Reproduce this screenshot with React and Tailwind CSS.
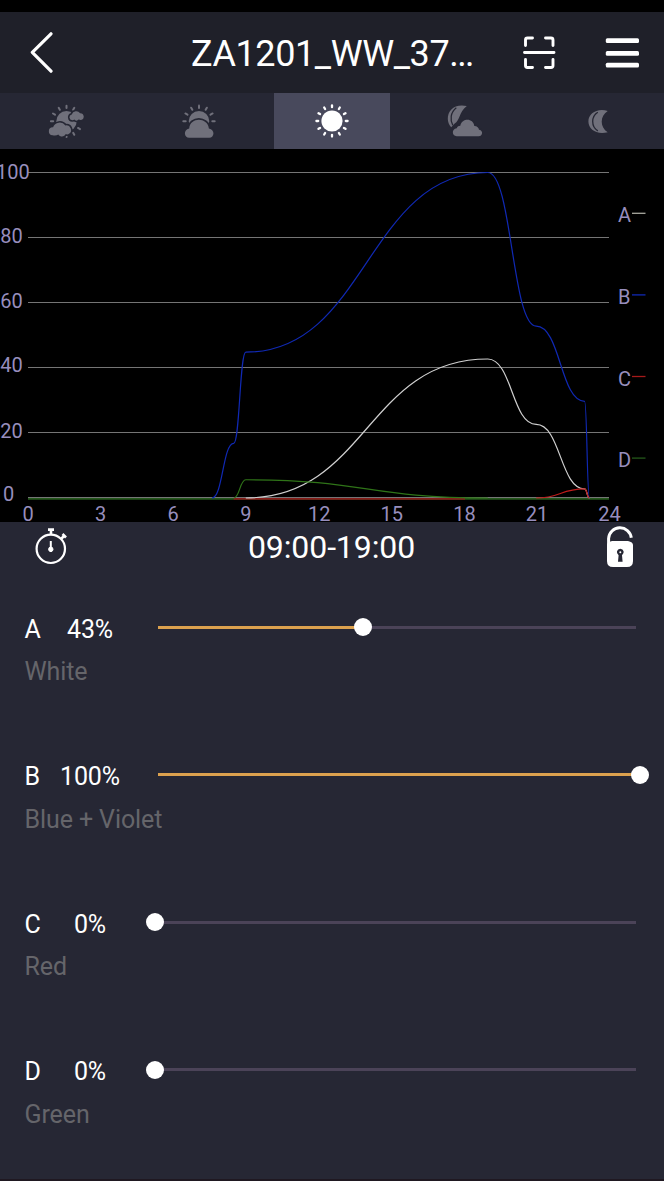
import React, { useState } from 'react';

const CHANNELS = [
  { id: 'A', name: 'White', value: 43, color: '#d0d0d0', legend: '#a9a9a0' },
  { id: 'B', name: 'Blue + Violet', value: 100, color: '#1029b4', legend: '#1029b4' },
  { id: 'C', name: 'Red', value: 0, color: '#c01c1c', legend: '#a51a1a' },
  { id: 'D', name: 'Green', value: 0, color: '#2f7418', legend: '#24581a' },
];

// [hour, percent] keyframes of the day
const CURVES = {
  A: [[9, 0], [19, 42.7], [21, 22.6], [23, 2.8], [23.2, 0]],
  B: [[7.6, 0], [8.5, 16.8], [9, 44.8], [19, 100], [21, 52.8], [23, 29.7], [23.2, 0]],
  C: [[21, 0], [23, 2.8], [23.2, 0]],
  D: [[8.5, 0], [9, 5.6], [19, 0]],
};

const toX = hour => 28 + hour * 24.2;
const toY = percent => 349 - percent * 3.255;

function curvePath(points) {
  return points.map(([h, p], i) => {
    const x = toX(h);
    const y = toY(p);
    if (i === 0) return `M${x} ${y}`;
    const [ph, pp] = points[i - 1];
    const mid = (toX(ph) + x) / 2;
    return `C${mid} ${toY(pp)} ${mid} ${y} ${x} ${y}`;
  }).join(' ');
}

function Rays({ cx, cy, inner, outer, angles, width = 2 }) {
  return angles.map(a => {
    const r = (a * Math.PI) / 180;
    return (
      <line
        key={a}
        x1={cx + Math.cos(r) * inner}
        y1={cy - Math.sin(r) * inner}
        x2={cx + Math.cos(r) * outer}
        y2={cy - Math.sin(r) * outer}
        stroke="currentColor"
        strokeWidth={width}
        strokeLinecap="round"
      />
    );
  });
}

function DawnIcon() {
  return (
    <svg width="36" height="36" viewBox="0 0 36 36" className="text-[#70707b]" fill="currentColor">
      <Rays cx={18.5} cy={18.3} inner={13.3} outer={15.6} angles={[60, 90, 120, 150, 180, 270, 300, 330]} />
      <circle cx="18.5" cy="18.3" r="10.2" />
      <g stroke="#262734" strokeWidth="3" paintOrder="stroke">
        <path d="M24.3 17.3a3 3 0 0 1-.6-5.9 4.8 4.8 0 0 1 8.4-1.1 3.4 3.4 0 0 1 1 6.7c-1 .2-1.7-.1-2.3-.7-1.7 2-3.5 1.6-4.3.2-.6.6-1.4.8-2.2.8z" />
        <path d="M4.6 32.3a4 4 0 0 1 .5-8 7 7 0 0 1 12.3-1.8 4.6 4.6 0 0 1 3.6 8.3c-.9.8-2.3.9-3.3.3-1 2.7-5 3.7-7.4.5-1.4 1-3.5 1.3-5.7.7z" />
      </g>
    </svg>
  );
}

function MorningIcon() {
  return (
    <svg width="36" height="36" viewBox="0 0 36 36" className="text-[#70707b]" fill="currentColor">
      <Rays cx={18} cy={18.3} inner={13.3} outer={15.7} angles={[0, 30, 60, 90, 120, 150, 180]} />
      <path d="M7.7 18.3a10.3 10.3 0 0 1 20.6 0l-1 3H8.7z" />
      <path
        d="M8.2 34.7c-5.2 0-6.2-8.2 0-9.3 1-11.5 18.2-11.5 19.7 0 6.4 1 5.7 9.3.3 9.3z"
        stroke="#262734"
        strokeWidth="3.4"
        paintOrder="stroke"
      />
    </svg>
  );
}

function DayIcon() {
  return (
    <svg width="36" height="36" viewBox="0 0 36 36" className="text-white" fill="currentColor">
      <Rays cx={18} cy={18} inner={13.8} outer={15.6} angles={[0, 30, 60, 90, 120, 150, 180, 210, 240, 270, 300, 330]} width={2.3} />
      <circle cx="18" cy="18" r="10.6" />
    </svg>
  );
}

function EveningIcon() {
  return (
    <svg width="36" height="36" viewBox="0 0 36 36" className="-translate-x-px text-[#70707b]" fill="currentColor">
      <path d="M20.8 3C9 .3 1.5 7.3 1.8 16c.1 3.3 1.3 6 3.4 8.2l3.2-3.5C14.5 17 12.5 9.5 20.8 3z" />
      <path d="M10.3 4.7C4.2 9.5 4 17 6.8 22.2" fill="none" stroke="#262734" strokeWidth="1.3" />
      <path
        d="M10.7 33.2c-4.9 0-5.4-7.3 0-8 .8-1.8 2-2.5 3.6-2.5 1.7-8 13-8 14 .3 3 .2 4.3 1.6 4.7 3.7 4.4.6 3.8 6.5-.3 6.5z"
        stroke="#262734"
        strokeWidth="3"
        paintOrder="stroke"
      />
    </svg>
  );
}

function NightIcon() {
  return (
    <svg width="36" height="36" viewBox="0 0 36 36" className="text-[#70707b]" fill="currentColor">
      <path d="M27.7 7.9C17 4.8 8.4 10.5 8.4 18.5S17 32.1 27.7 29.2c-8-5-8-16.300 0-21.300z" />
      <path d="M17.8 9.3c-6.8 4.2-6.8 14.4 0 18.6" fill="none" stroke="#262734" strokeWidth="1.3" />
    </svg>
  );
}

const PHASES = [
  { id: 'dawn', Icon: DawnIcon },
  { id: 'morning', Icon: MorningIcon },
  { id: 'day', Icon: DayIcon },
  { id: 'evening', Icon: EveningIcon },
  { id: 'night', Icon: NightIcon },
];

function Header() {
  return (
    <header className="flex h-[81px] items-center bg-[#1f2029] text-white">
      <button className="ml-[29px] h-11 w-6" aria-label="Back">
        <svg width="24" height="44" viewBox="0 0 24 44" fill="none" stroke="currentColor" strokeWidth="3.2" strokeLinecap="round" strokeLinejoin="round">
          <path d="M22 2.8 3.3 21.3 22 40.2" />
        </svg>
      </button>
      <h1 className="ml-[138px] w-[332px] pt-[3px] text-[36px] leading-none tracking-[-0.4px] whitespace-nowrap">
        ZA1201_WW_37<span className="tracking-[-1.6px]">...</span>
      </h1>
      <button className="h-[34px] w-[34px] shrink-0" aria-label="Scan">
        <svg width="34" height="34" viewBox="0 0 34 34" fill="none" stroke="currentColor" strokeWidth="2.9" strokeLinecap="round">
          <path d="M2.5 9.5V4q0-2 2-2h5M22.5 2H28q2 0 2 2v5.5M30 23.5v6q0 2-2 2h-5.5M9.5 31.500h-5q-2 0-2-2v-6M1.500 16.500H31" />
        </svg>
      </button>
      <button className="ml-12 h-[34px] w-[34px] shrink-0" aria-label="Menu">
        <svg width="34" height="34" viewBox="0 0 34 34" fill="currentColor">
          <rect x="0.8" y="2.2" width="33.2" height="4.7" rx="1.5" />
          <rect x="0.8" y="15" width="33.2" height="4.7" rx="1.5" />
          <rect x="0.8" y="26.8" width="33.2" height="4.7" rx="1.5" />
        </svg>
      </button>
    </header>
  );
}

function PhaseTabs({ active, onChange }) {
  return (
    <nav className="flex h-[56px] bg-[#262734]">
      {PHASES.map(({ id, Icon }) => (
        <button key={id} onClick={() => onChange(id)} className="flex flex-1 justify-center" aria-label={id}>
          <span className={`flex h-full w-[116px] items-center justify-center ${active === id ? 'bg-[#48495c]' : ''}`}>
            <Icon />
          </span>
        </button>
      ))}
    </nav>
  );
}

function ScheduleChart() {
  return (
    <div className="h-[373px] bg-black">
      <svg width="664" height="373" viewBox="0 0 664 373" className="block overflow-visible">
        {[100, 80, 60, 40, 20, 0].map((v, i) => (
          <g key={v}>
            <line x1="28" x2="609" y1={23.5 + i * 65} y2={23.5 + i * 65} stroke="#757575" strokeWidth="1" />
            <text
              x={v === 100 ? 12.8 : v === 0 ? 8.5 : 11.5}
              y={[30.3, 94.3, 158.8, 223.3, 288.5, 352][i]}
              textAnchor="middle"
              fontSize="20"
              fill="#978ebd"
            >
              {v}
            </text>
          </g>
        ))}
        <line x1="28" x2="609" y1="349.8" y2="349.8" stroke="#24571c" strokeWidth="1.8" />
        <line x1={toX(8.5)} x2="465" y1="349.8" y2="349.8" stroke="#861b19" strokeWidth="1.8" />
        {CHANNELS.map(c => (
          <path key={c.id} d={curvePath(CURVES[c.id])} fill="none" stroke={c.color} strokeWidth="1.2" />
        ))}
        {[0, 3, 6, 9, 12, 15, 18, 21, 24].map(h => (
          <text key={h} x={toX(h) + (h > 9 ? 0.8 : 0)} y="372" textAnchor="middle" fontSize="20" fill="#978ebd">{h}</text>
        ))}
        {CHANNELS.map((c, i) => (
          <g key={c.id}>
            <text x="618" y={73.3 + i * 81.6} fontSize="20" fill="#978ebd">{c.id}</text>
            <line x1="632" x2="645.5" y1={64.3 + i * 81.6} y2={64.3 + i * 81.6} stroke={c.legend} strokeWidth="1.3" />
          </g>
        ))}
      </svg>
    </div>
  );
}

function TimeRow() {
  return (
    <div className="flex h-[58px] items-start text-white">
      <svg width="36" height="40" viewBox="0 0 36 40" className="ml-[33px] mt-[5px]" fill="none" stroke="currentColor">
        <circle cx="17.8" cy="21.8" r="14.2" strokeWidth="2.2" />
        <path d="M15 2.6h6M18 3v5M28.5 11.5l3-3M29.5 7l3.5 3.5" strokeWidth="2.6" />
        <path d="M17.8 14v11" strokeWidth="2" />
        <circle cx="17.8" cy="22.3" r="2.2" fill="currentColor" strokeWidth="1" />
      </svg>
      <p className="flex-1 pr-[12px] pt-[8px] text-center text-[32px] leading-[34px] tracking-[-0.1px]">09:00-19:00</p>
      <svg width="28" height="44" viewBox="0 0 28 44" className="mr-[30px] mt-[3px]" fill="none">
        <path d="M2.6 20V13.5a11.4 11.4 0 0 1 22.7-.7" stroke="currentColor" strokeWidth="3" />
        <path d="M1 20q0-3 5-4h16q5 1 5 4v16q0 6-6 6H7q-6 0-6-6z" fill="currentColor" />
        <path d="M14.3 23.7a3.5 3.5 0 0 0-1.7 6.5l-.6 6.5h4.6l-.6-6.5a3.5 3.5 0 0 0-1.7-6.5z" fill="#262734" />
        <circle cx="14.3" cy="27.3" r="1" fill="currentColor" />
      </svg>
    </div>
  );
}

function ChannelSlider({ channel, value, onChange }) {
  return (
    <div className="flex h-[147.5px] items-start text-[25px] tracking-[-0.1px]">
      <div className="w-[145px] shrink-0 pl-[24.5px] pt-[34.5px]">
        <div className="flex leading-[30px] text-white">
          <span className="w-[30px]">{channel.id}</span>
          <span className="w-[71px] text-center">{value}%</span>
        </div>
        <p className="mt-[12.5px] leading-[30px] whitespace-nowrap text-[#65656a]">{channel.name}</p>
      </div>
      <div className="relative mt-[38px] h-[18px] w-[504px]">
        <div className="mx-[13px] mt-[7.5px] h-[3px] bg-[#4b4358]">
          <div className="h-full bg-[#dca14e]" style={{ width: `${value}%` }}></div>
        </div>
        <div
          className="absolute top-0 h-[18px] w-[18px] rounded-full bg-white"
          style={{ left: `${0.5 + value * 4.85}px` }}
        ></div>
        <input
          type="range"
          min="0"
          max="100"
          value={value}
          onChange={e => onChange(Number(e.target.value))}
          aria-label={channel.name}
          className="absolute inset-0 w-full cursor-pointer opacity-0"
        />
      </div>
    </div>
  );
}

export default function App() {
  const [phase, setPhase] = useState('day');
  const [values, setValues] = useState(() => CHANNELS.map(c => c.value));

  const handleChange = (index, value) => {
    setValues(prev => prev.map((v, i) => (i === index ? value : v)));
  };

  return (
    <div className="flex h-[1181px] w-[664px] flex-col overflow-hidden bg-[#262734] font-['Roboto',sans-serif]">
      <div className="h-3 bg-black"></div>
      <Header />
      <PhaseTabs active={phase} onChange={setPhase} />
      <ScheduleChart />
      <TimeRow />
      {CHANNELS.map((c, i) => (
        <ChannelSlider key={c.id} channel={c} value={values[i]} onChange={v => handleChange(i, v)} />
      ))}
      <div className="mt-auto h-[2px] bg-[#1f1821]"></div>
    </div>
  );
}
